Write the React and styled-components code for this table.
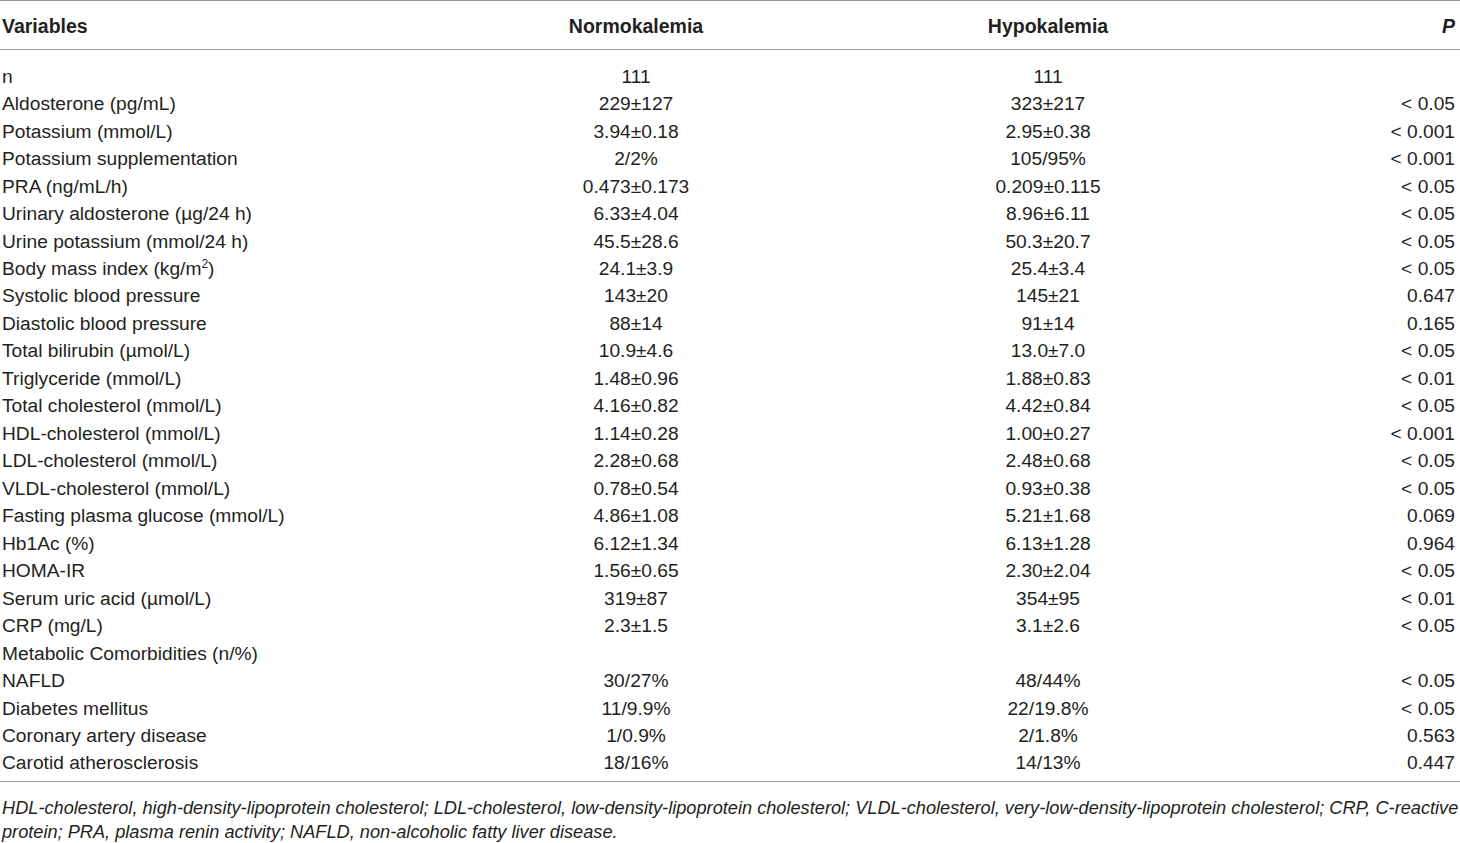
import React from 'react';
import styled, { createGlobalStyle } from 'styled-components';

const GlobalStyle = createGlobalStyle`
  html, body {
    margin: 0;
    padding: 0;
    background: #ffffff;
  }
  body {
    font-family: "Liberation Sans", Arial, sans-serif;
    color: #231f20;
  }
`;

const Wrapper = styled.div`
  width: 1460px;
`;

const Table = styled.div`
  border-top: 1.5px solid #9a9a9a;
  border-bottom: 1.5px solid #9a9a9a;
`;

const Row = styled.div`
  display: grid;
  grid-template-columns: 430px 412px 412px 206px;
  align-items: center;
  height: ${(p) => (p.$head ? '49px' : '27.48px')};
  padding-top: ${(p) => (p.$head ? '2px' : '0')};
  box-sizing: border-box;
  font-size: ${(p) => (p.$head ? '19.5px' : '19.2px')};
  font-weight: ${(p) => (p.$head ? 700 : 400)};
  border-bottom: ${(p) => (p.$head ? '1.5px solid #9a9a9a' : 'none')};
`;

const Body = styled.div`
  padding: 13px 0 4px;
`;

const Cell = styled.div`
  white-space: nowrap;
  padding-left: ${(p) => (p.$first ? '2px' : '0')};
  padding-right: ${(p) => (p.$last ? '5px' : '0')};
  text-align: ${(p) => p.$align || 'center'};
  font-style: ${(p) => (p.$italic ? 'italic' : 'normal')};
`;

const Sup = styled.sup`
  font-size: 12px;
  line-height: 0;
`;

const Note = styled.p`
  margin: 0;
  padding: 14px 0 0 2px;
  font-size: 18.2px;
  line-height: 24px;
  font-style: italic;
  white-space: nowrap;
`;

const rows = [
  ['n', '111', '111', ''],
  ['Aldosterone (pg/mL)', '229±127', '323±217', '< 0.05'],
  ['Potassium (mmol/L)', '3.94±0.18', '2.95±0.38', '< 0.001'],
  ['Potassium supplementation', '2/2%', '105/95%', '< 0.001'],
  ['PRA (ng/mL/h)', '0.473±0.173', '0.209±0.115', '< 0.05'],
  ['Urinary aldosterone (µg/24 h)', '6.33±4.04', '8.96±6.11', '< 0.05'],
  ['Urine potassium (mmol/24 h)', '45.5±28.6', '50.3±20.7', '< 0.05'],
  [<>Body mass index (kg/m<Sup>2</Sup>)</>, '24.1±3.9', '25.4±3.4', '< 0.05'],
  ['Systolic blood pressure', '143±20', '145±21', '0.647'],
  ['Diastolic blood pressure', '88±14', '91±14', '0.165'],
  ['Total bilirubin (µmol/L)', '10.9±4.6', '13.0±7.0', '< 0.05'],
  ['Triglyceride (mmol/L)', '1.48±0.96', '1.88±0.83', '< 0.01'],
  ['Total cholesterol (mmol/L)', '4.16±0.82', '4.42±0.84', '< 0.05'],
  ['HDL-cholesterol (mmol/L)', '1.14±0.28', '1.00±0.27', '< 0.001'],
  ['LDL-cholesterol (mmol/L)', '2.28±0.68', '2.48±0.68', '< 0.05'],
  ['VLDL-cholesterol (mmol/L)', '0.78±0.54', '0.93±0.38', '< 0.05'],
  ['Fasting plasma glucose (mmol/L)', '4.86±1.08', '5.21±1.68', '0.069'],
  ['Hb1Ac (%)', '6.12±1.34', '6.13±1.28', '0.964'],
  ['HOMA-IR', '1.56±0.65', '2.30±2.04', '< 0.05'],
  ['Serum uric acid (µmol/L)', '319±87', '354±95', '< 0.01'],
  ['CRP (mg/L)', '2.3±1.5', '3.1±2.6', '< 0.05'],
  ['Metabolic Comorbidities (n/%)', '', '', ''],
  ['NAFLD', '30/27%', '48/44%', '< 0.05'],
  ['Diabetes mellitus', '11/9.9%', '22/19.8%', '< 0.05'],
  ['Coronary artery disease', '1/0.9%', '2/1.8%', '0.563'],
  ['Carotid atherosclerosis', '18/16%', '14/13%', '0.447'],
];

const App = () => (
  <Wrapper>
    <GlobalStyle />
    <Table>
      <Row $head>
        <Cell $first $align="left">Variables</Cell>
        <Cell>Normokalemia</Cell>
        <Cell>Hypokalemia</Cell>
        <Cell $last $align="right" $italic>P</Cell>
      </Row>
      <Body>
        {rows.map((r, i) => (
          <Row key={i}>
            <Cell $first $align="left">{r[0]}</Cell>
            <Cell>{r[1]}</Cell>
            <Cell>{r[2]}</Cell>
            <Cell $last $align="right">{r[3]}</Cell>
          </Row>
        ))}
      </Body>
    </Table>
    <Note>
      HDL-cholesterol, high-density-lipoprotein cholesterol; LDL-cholesterol, low-density-lipoprotein cholesterol;
      VLDL-cholesterol, very-low-density-lipoprotein cholesterol; CRP, C-reactive
      <br />
      protein; PRA, plasma renin activity; NAFLD, non-alcoholic fatty liver disease.
    </Note>
  </Wrapper>
);

export default App;
